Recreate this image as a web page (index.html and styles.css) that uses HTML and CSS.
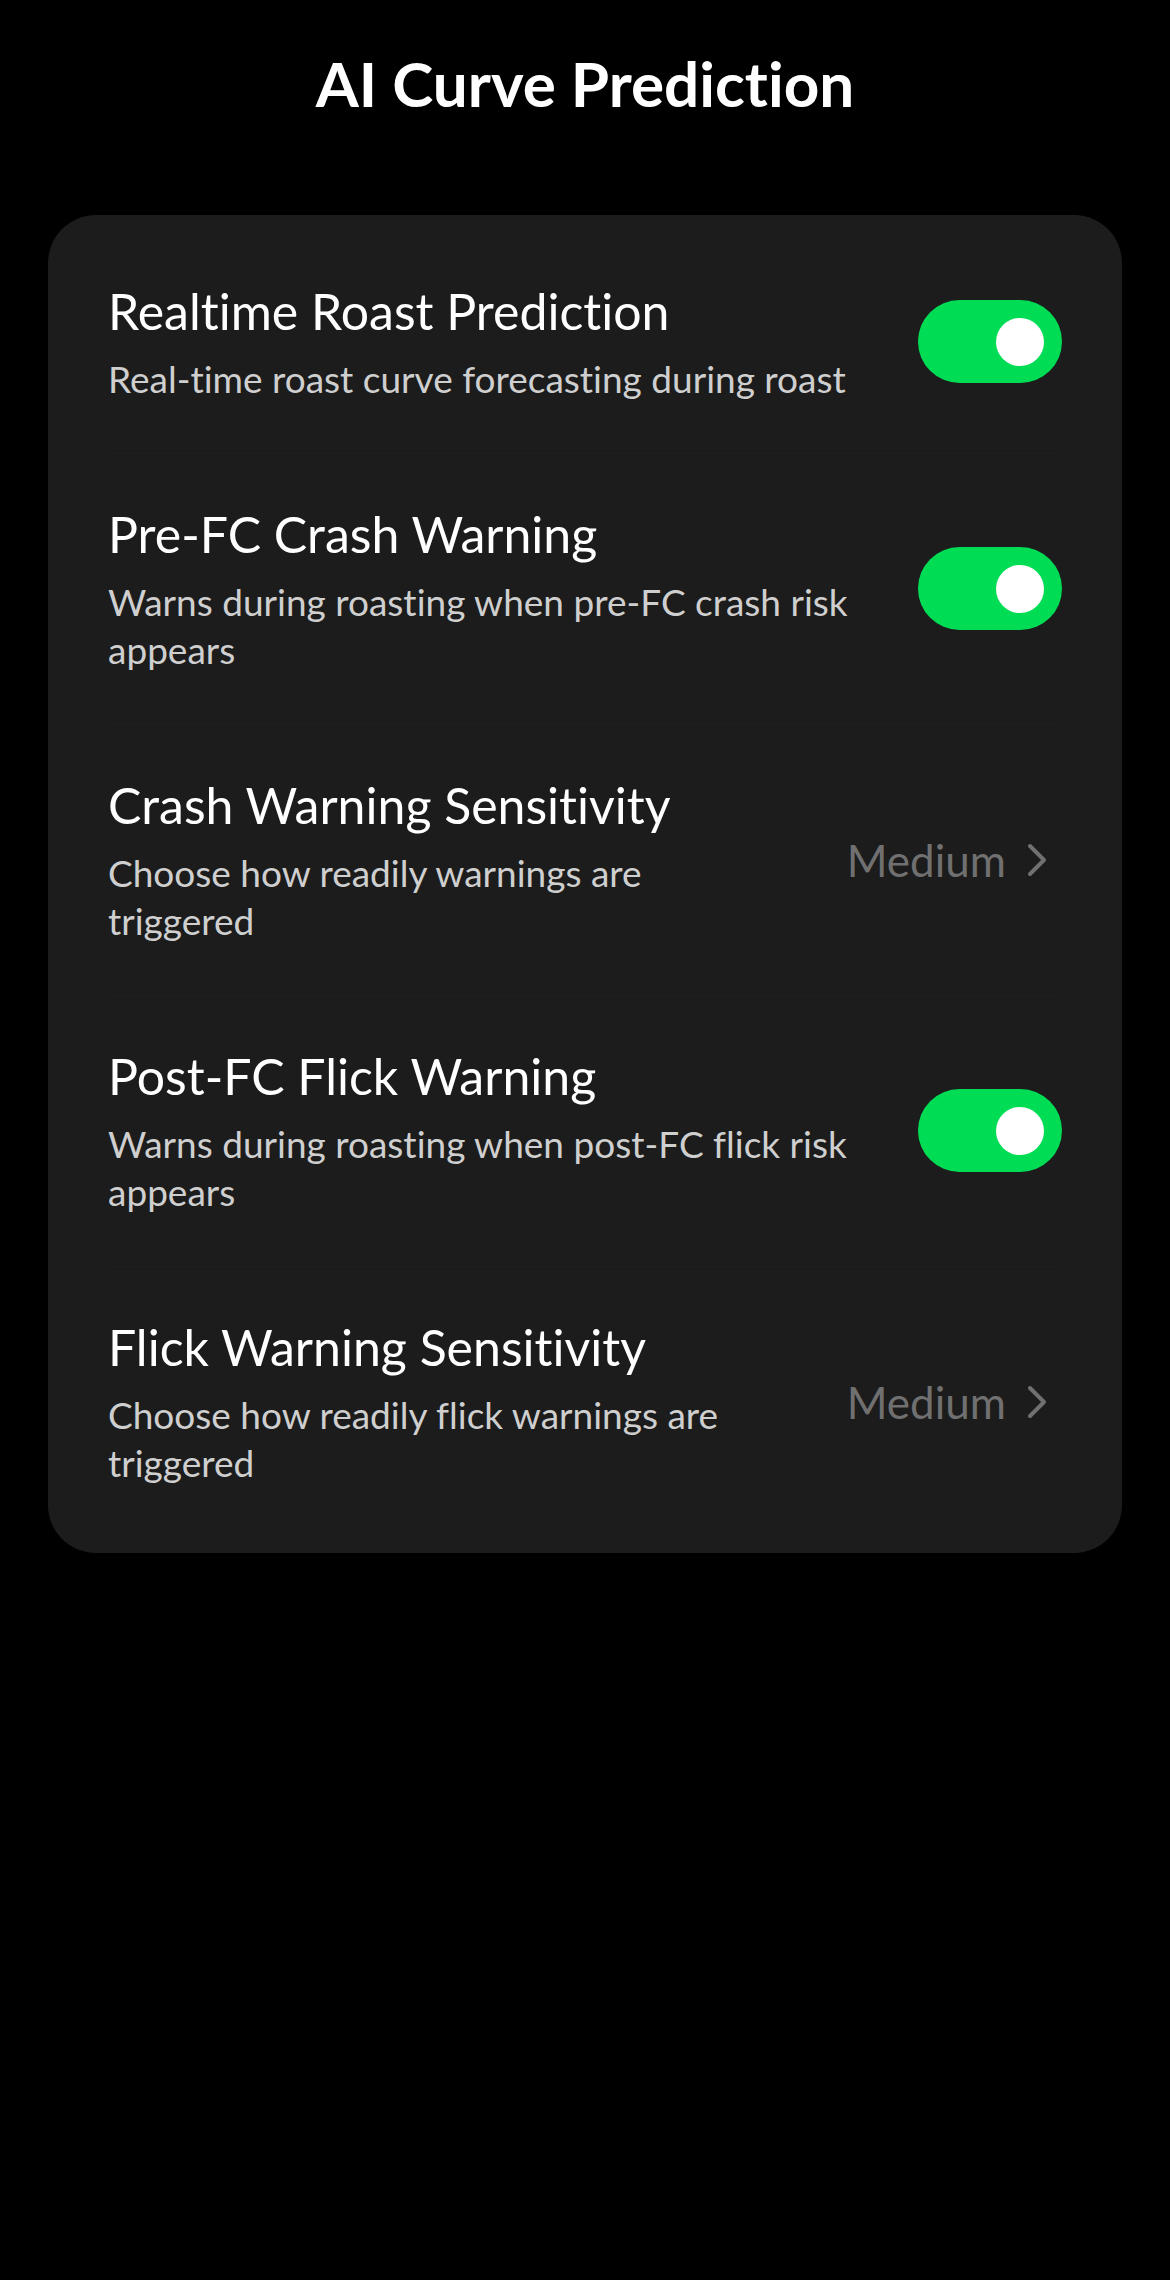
FILE: index.html
```html
<!DOCTYPE html>
<html lang="en">
<head>
    <meta charset="UTF-8">
    <meta name="viewport" content="width=device-width, initial-scale=1.0">
    <title>AI Curve Prediction</title>
    <link rel="stylesheet" href="styles.css">
</head>
<body>
    <h1 class="page-title">AI Curve Prediction</h1>

    <div class="card">
        <div class="row">
            <div class="row-text">
                <div class="row-title">Realtime Roast Prediction</div>
                <div class="row-desc">Real-time roast curve forecasting during roast</div>
            </div>
            <div class="switch on"><span class="knob"></span></div>
        </div>

        <div class="row">
            <div class="row-text">
                <div class="row-title">Pre-FC Crash Warning</div>
                <div class="row-desc">Warns during roasting when pre-FC crash risk appears</div>
            </div>
            <div class="switch on"><span class="knob"></span></div>
        </div>

        <div class="row">
            <div class="row-text">
                <div class="row-title">Crash Warning Sensitivity</div>
                <div class="row-desc">Choose how readily warnings are triggered</div>
            </div>
            <div class="row-value">
                <span>Medium</span>
                <svg class="chevron" width="20" height="34" viewBox="0 0 20 34">
                    <path d="M3 3 L17 17 L3 31" fill="none" stroke="currentColor" stroke-width="4" stroke-linecap="round" stroke-linejoin="round"/>
                </svg>
            </div>
        </div>

        <div class="row">
            <div class="row-text">
                <div class="row-title">Post-FC Flick Warning</div>
                <div class="row-desc">Warns during roasting when post-FC flick risk appears</div>
            </div>
            <div class="switch on"><span class="knob"></span></div>
        </div>

        <div class="row">
            <div class="row-text">
                <div class="row-title">Flick Warning Sensitivity</div>
                <div class="row-desc">Choose how readily flick warnings are triggered</div>
            </div>
            <div class="row-value">
                <span>Medium</span>
                <svg class="chevron" width="20" height="34" viewBox="0 0 20 34">
                    <path d="M3 3 L17 17 L3 31" fill="none" stroke="currentColor" stroke-width="4" stroke-linecap="round" stroke-linejoin="round"/>
                </svg>
            </div>
        </div>
    </div>
</body>
</html>
```

FILE: styles.css
```css
body {
    margin: 0;
    min-height: 2280px;
    background-color: #000;
    color: #fff;
    font-family: Lato, "Noto Sans", sans-serif;
    font-variant-ligatures: none;
}
.page-title {
    margin: 47px 0 0;
    font-size: 62px;
    line-height: 72px;
    font-weight: bold;
    text-align: center;
}
.card {
    margin: 96px 48px 0;
    padding: 16px 60px;
    background-color: #1c1c1c;
    border-radius: 48px;
}
.row {
    display: flex;
    align-items: center;
    padding: 49px 0 50px;
    border-top: 1px solid #1f1f1f;
}
.row:first-child {
    border-top: none;
}
.row-text {
    flex: 1;
}
.row-title {
    font-size: 50px;
    line-height: 62px;
}
.row-desc {
    margin-top: 13px;
    font-size: 37px;
    line-height: 48px;
    color: #cfcfcf;
}
.switch {
    flex-shrink: 0;
    display: flex;
    justify-content: flex-end;
    align-items: center;
    width: 144px;
    height: 83px;
    margin-left: 40px;
    padding-right: 18px;
    box-sizing: border-box;
    border-radius: 42px;
    background-color: #00dd55;
}
.knob {
    width: 48px;
    height: 48px;
    border-radius: 50%;
    background-color: #fff;
}
.row-value {
    flex-shrink: 0;
    display: flex;
    align-items: center;
    gap: 21px;
    padding-left: 90px;
    font-size: 44px;
    color: #707070;
}
.chevron {
    margin-right: 15px;
}
```
